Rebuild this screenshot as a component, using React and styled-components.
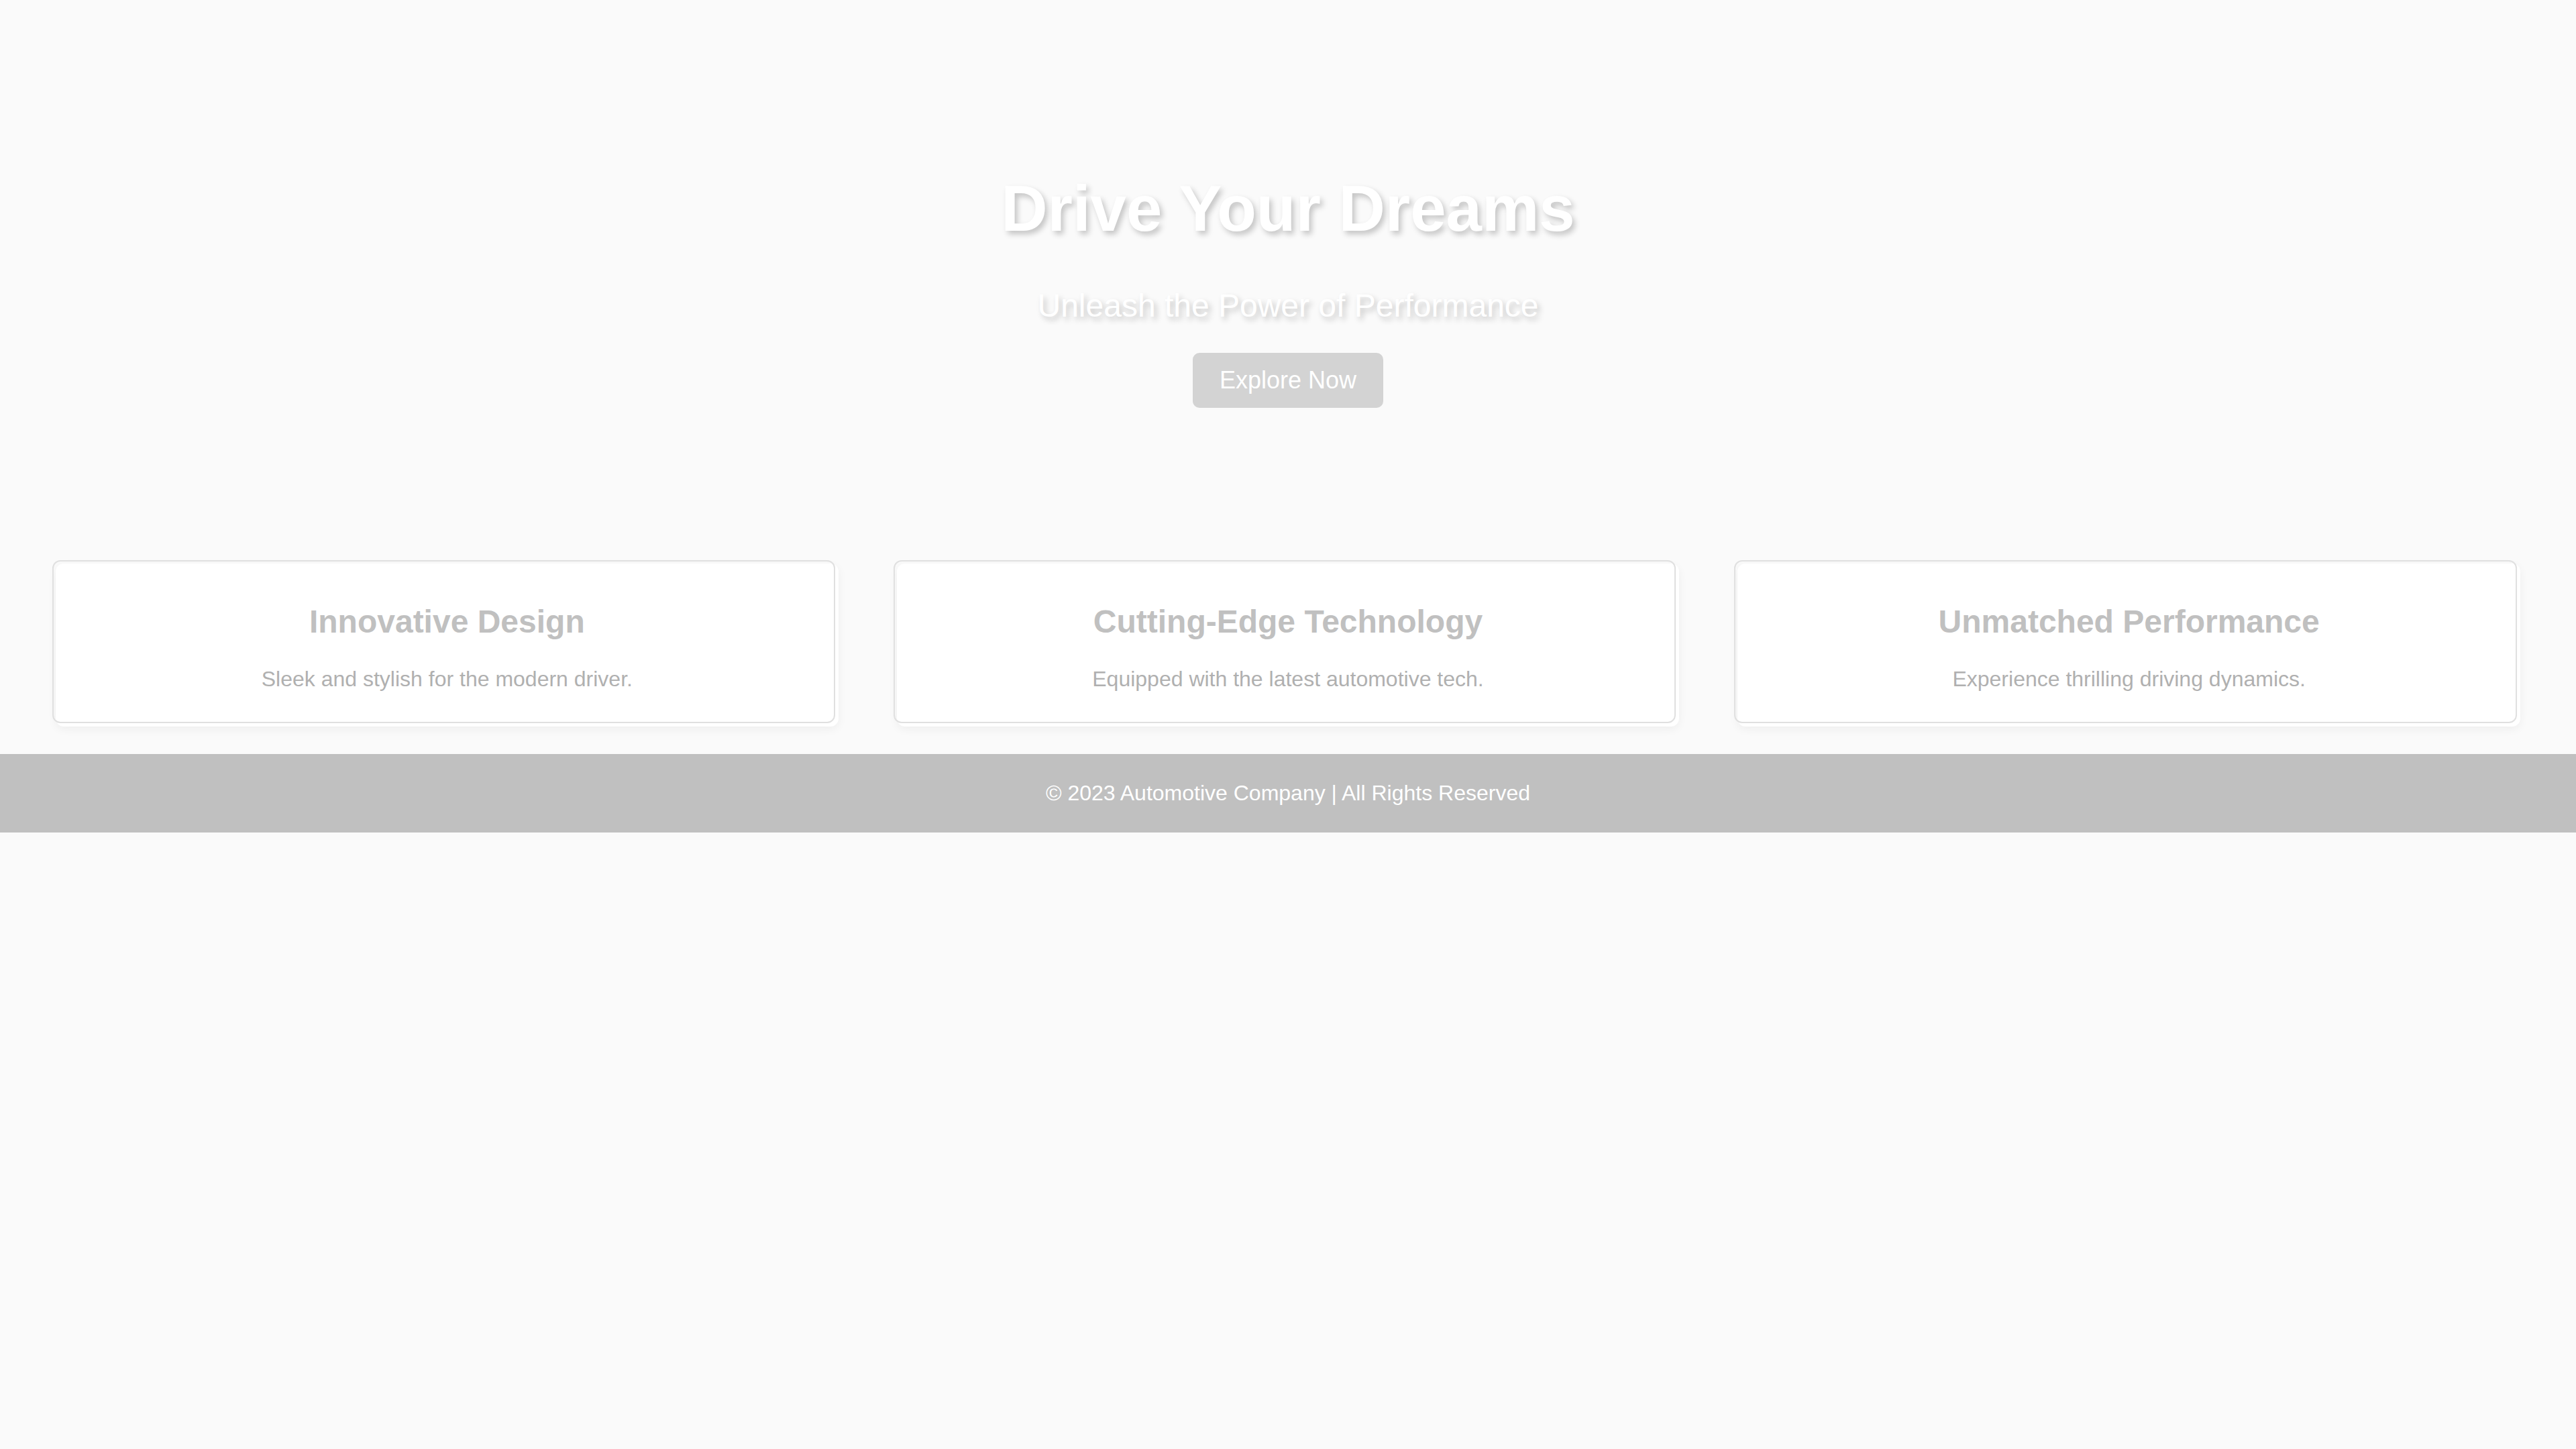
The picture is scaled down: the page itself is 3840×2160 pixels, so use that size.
import React from "react";
import styled, { createGlobalStyle } from "styled-components";

const GlobalStyle = createGlobalStyle`
  html, body {
    margin: 0;
    padding: 0;
    background: #fafafa;
    font-family: "Liberation Sans", Arial, sans-serif;
  }
`;

const Page = styled.div`
  display: flex;
  flex-direction: column;
  background: #fafafa;
`;

const Hero = styled.header`
  display: flex;
  flex-direction: column;
  align-items: center;
  padding: 256px 0 200px;
  text-align: center;
`;

const HeroTitle = styled.h1`
  margin: 0;
  font-size: 96px;
  font-weight: bold;
  color: #ffffff;
  text-shadow: 4px 5px 8px rgba(0, 0, 0, 0.22);
`;

const HeroSubtitle = styled.p`
  margin: 62px 0 0;
  font-size: 48px;
  color: #ffffff;
  text-shadow: 4px 5px 8px rgba(0, 0, 0, 0.22);
`;

const HeroButton = styled.button`
  margin-top: 43px;
  padding: 20px 40px;
  border: none;
  border-radius: 10px;
  background: #d3d3d3;
  color: #ffffff;
  font-family: inherit;
  font-size: 36px;
  line-height: 42px;
  cursor: pointer;
`;

const Features = styled.section`
  display: grid;
  grid-template-columns: repeat(3, 1fr);
  gap: 87px;
  padding: 32px 83px 41px;
`;

const Card = styled.div`
  position: relative;
  padding: 59px 40px 52px;
  background: #ffffff;
  border-radius: 12px;
  box-shadow: 0 4px 14px rgba(0, 0, 0, 0.05);
  text-align: center;

  &::before {
    content: "";
    position: absolute;
    top: -5px;
    left: -5px;
    right: 5px;
    bottom: 5px;
    border: 2px solid #e0e0e0;
    border-radius: 12px;
    pointer-events: none;
  }
`;

const CardTitle = styled.h3`
  margin: 0 0 40px;
  font-size: 48px;
  font-weight: bold;
  color: #c0c0c0;
`;

const CardText = styled.p`
  margin: 0;
  font-size: 32px;
  color: #b0b0b0;
`;

const Footer = styled.footer`
  padding: 40px 0;
  background: #c0c0c0;
  color: #ffffff;
  text-align: center;
  font-size: 32px;
  line-height: 37px;
`;

const features = [
  { title: "Innovative Design", text: "Sleek and stylish for the modern driver." },
  { title: "Cutting-Edge Technology", text: "Equipped with the latest automotive tech." },
  { title: "Unmatched Performance", text: "Experience thrilling driving dynamics." },
];

export default function App() {
  return (
    <Page>
      <GlobalStyle />
      <Hero>
        <HeroTitle>Drive Your Dreams</HeroTitle>
        <HeroSubtitle>Unleash the Power of Performance</HeroSubtitle>
        <HeroButton>Explore Now</HeroButton>
      </Hero>
      <Features>
        {features.map(({ title, text }, i) => (
          <Card key={i}>
            <CardTitle>{title}</CardTitle>
            <CardText>{text}</CardText>
          </Card>
        ))}
      </Features>
      <Footer>© 2023 Automotive Company | All Rights Reserved</Footer>
    </Page>
  );
}
